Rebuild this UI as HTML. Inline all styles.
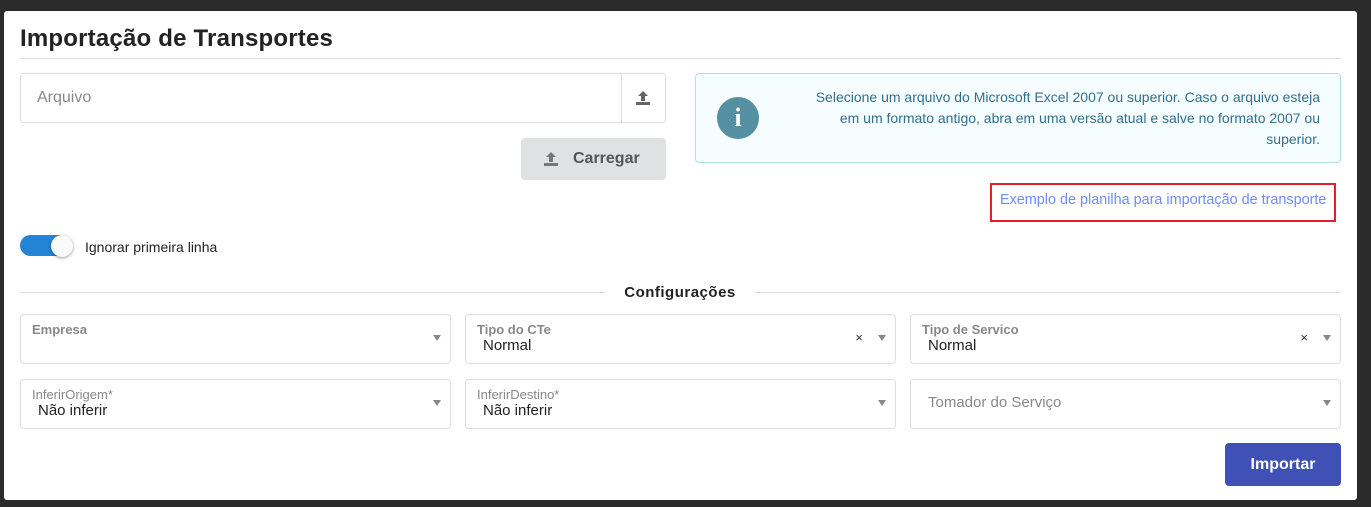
<!DOCTYPE html>
<html><head><meta charset="utf-8"><style>
*{box-sizing:border-box;margin:0;padding:0}
body{width:1371px;height:507px;background:#2b2b2b;font-family:"Liberation Sans",Arial,sans-serif;position:relative;overflow:hidden}
.a{position:absolute}
.dlg{left:4px;top:11px;width:1353px;height:489px;background:#fff;border-radius:3px}
.sel{position:absolute;border:1px solid #ddd;border-radius:4px;height:50px;width:431px}
.lbl{position:absolute;left:11px;top:7px;font-size:13px;font-weight:bold;color:#888}
.val{position:absolute;left:17px;top:22px;font-size:15px;color:#222}
.arr{position:absolute;right:9px;top:20px;width:0;height:0;border-left:4px solid transparent;border-right:4px solid transparent;border-top:6px solid #888}
.x{position:absolute;right:32px;top:15px;font-size:13px;color:#333}
</style></head><body>
<div class="a dlg"></div>
<div class="a" style="left:20px;top:25px;font-size:24px;font-weight:bold;color:#222;letter-spacing:.2px">Importação de Transportes</div>
<div class="a" style="left:20px;top:58px;width:1321px;height:1px;background:#ddd"></div>

<div class="a" style="left:20px;top:73px;width:646px;height:50px;border:1px solid #ddd;border-radius:3px"></div>
<div class="a" style="left:621px;top:74px;width:1px;height:48px;background:#ddd"></div>
<div class="a" style="left:37px;top:89px;font-size:16px;color:#888">Arquivo</div>
<svg class="a" style="left:635px;top:90px" width="16" height="16" viewBox="0 0 16 16"><path d="M8 1L3 6h3v5h4V6h3z" fill="#666"/><rect x="1" y="12" width="14" height="3" fill="#666"/></svg>

<div class="a" style="left:521px;top:138px;width:145px;height:42px;background:#e0e1e2;border-radius:4px"></div>
<svg class="a" style="left:543px;top:151px" width="16" height="16" viewBox="0 0 16 16"><path d="M8 1L3 6h3v5h4V6h3z" fill="#777"/><rect x="1" y="12" width="14" height="3" fill="#777"/></svg>
<div class="a" style="left:573px;top:150px;font-size:16px;font-weight:bold;color:#555">Carregar</div>

<div class="a" style="left:695px;top:73px;width:646px;height:90px;background:#f5fdfe;border:1px solid #b5dde4;border-radius:4px"></div>
<div class="a" style="left:717px;top:97px;width:42px;height:42px;border-radius:50%;background:#548fa2;color:#fff;font-family:'Liberation Serif',serif;font-weight:bold;font-size:26px;text-align:center;line-height:42px">i</div>
<div class="a" style="left:720px;top:87px;width:600px;text-align:right;font-size:14px;line-height:21px;color:#31708f;white-space:nowrap">Selecione um arquivo do Microsoft Excel 2007 ou superior. Caso o arquivo esteja<br>em um formato antigo, abra em uma versão atual e salve no formato 2007 ou<br>superior.</div>

<div class="a" style="left:990px;top:183px;width:346px;height:39px;border:2px solid #e3202a"></div>
<div class="a" style="left:1000px;top:192px;font-size:14.4px;color:#6e8ef5">Exemplo de planilha para importação de transporte</div>

<div class="a" style="left:20px;top:235px;width:52px;height:21px;border-radius:11px;background:#2385d5"></div>
<div class="a" style="left:51px;top:235px;width:22px;height:22px;border-radius:50%;background:#fafafa;box-shadow:0 1px 3px rgba(0,0,0,.4)"></div>
<div class="a" style="left:85px;top:239px;font-size:14px;color:#222">Ignorar primeira linha</div>

<div class="a" style="left:20px;top:292px;width:1321px;height:1px;background:#ddd"></div>
<div class="a" style="left:606px;top:284px;width:148px;height:18px;background:#fff;text-align:center;font-size:15px;font-weight:bold;color:#222;letter-spacing:.5px">Configurações</div>

<div class="sel" style="left:20px;top:314px"><div class="lbl">Empresa</div><div class="arr"></div></div>
<div class="sel" style="left:465px;top:314px"><div class="lbl">Tipo do CTe</div><div class="val">Normal</div><div class="x">×</div><div class="arr"></div></div>
<div class="sel" style="left:910px;top:314px"><div class="lbl">Tipo de Servico</div><div class="val">Normal</div><div class="x">×</div><div class="arr"></div></div>
<div class="sel" style="left:20px;top:379px"><div class="lbl" style="font-weight:normal">InferirOrigem*</div><div class="val">Não inferir</div><div class="arr"></div></div>
<div class="sel" style="left:465px;top:379px"><div class="lbl" style="font-weight:normal">InferirDestino*</div><div class="val">Não inferir</div><div class="arr"></div></div>
<div class="sel" style="left:910px;top:379px"><div class="val" style="top:14px;color:#888">Tomador do Serviço</div><div class="arr"></div></div>

<div class="a" style="left:1225px;top:443px;width:116px;height:43px;background:#3f51b5;border-radius:4px;color:#fff;font-weight:bold;font-size:16px;text-align:center;line-height:43px">Importar</div>
</body></html>
